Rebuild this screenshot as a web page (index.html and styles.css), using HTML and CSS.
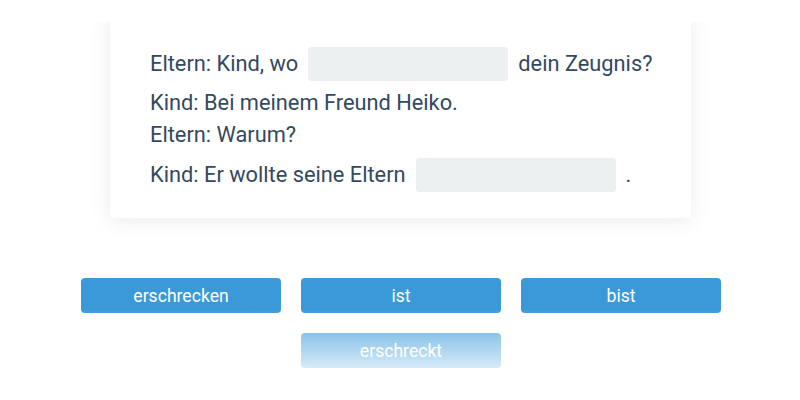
FILE: index.html
```html
<!DOCTYPE html>
<html>
<head>
<meta charset="utf-8">
<link rel="stylesheet" href="styles.css">
</head>
<body>
<div class="stage">
  <div class="viewport">
    <div class="card">
      <div class="row boxed">
        <span>Eltern: Kind, wo</span>
        <span class="blank"></span>
        <span>dein Zeugnis?</span>
      </div>
      <div class="row">Kind: Bei meinem Freund Heiko.</div>
      <div class="row">Eltern: Warum?</div>
      <div class="row boxed">
        <span>Kind: Er wollte seine Eltern</span>
        <span class="blank"></span>
        <span>.</span>
      </div>
    </div>
    <div class="options">
      <button class="opt">erschrecken</button>
      <button class="opt">ist</button>
      <button class="opt">bist</button>
      <button class="opt">erschreckt</button>
    </div>
  </div>
  <div class="fade"></div>
</div>
</body>
</html>
```

FILE: styles.css
```css
html, body {
  margin: 0;
  padding: 0;
  background: #fff;
}
body {
  font-family: Roboto, "Liberation Sans", sans-serif;
}
.stage {
  position: relative;
  width: 800px;
  height: 400px;
  overflow: hidden;
  padding-top: 22px;
  box-sizing: border-box;
}
.viewport {
  height: 378px;
  overflow: hidden;
  display: flex;
  flex-direction: column;
  align-items: center;
}
.card {
  width: 581px;
  box-sizing: border-box;
  margin-top: -10px;
  padding: 29px 40px 20px;
  margin-left: 1px;
  background: #fff;
  border-radius: 4px;
  box-shadow: 0 3px 22px rgba(0, 0, 0, 0.08);
  color: #34495e;
  font-size: 21.8px;
}
.row {
  display: flex;
  align-items: center;
  line-height: 32px;
  height: 32px;
  white-space: nowrap;
}
.row > span {
  flex-shrink: 0;
}
.row.boxed {
  height: 34px;
  padding: 6px 0;
}
.row.boxed:last-child {
  padding-top: 7px;
}
.blank {
  display: inline-block;
  width: 200px;
  height: 34px;
  margin: 0 10px;
  background: #ecf0f1;
  border-radius: 4px;
}
.options {
  margin-top: 60px;
  width: 640px;
  margin-left: 2px;
  display: flex;
  flex-wrap: wrap;
  justify-content: center;
  gap: 20px;
}
.opt {
  width: 200px;
  height: 35px;
  border: none;
  border-radius: 4px;
  background: #3a9ad9;
  color: #fff;
  font-family: Roboto, "Liberation Sans", sans-serif;
  font-size: 17.6px;
  font-weight: 400;
  padding: 0;
}
.fade {
  position: absolute;
  left: 0;
  right: 0;
  bottom: 0;
  height: 90px;
  background: linear-gradient(to bottom, rgba(255,255,255,0) 0%, rgba(255,255,255,0.4) 25%, rgba(255,255,255,1) 85%);
  pointer-events: none;
}
```
